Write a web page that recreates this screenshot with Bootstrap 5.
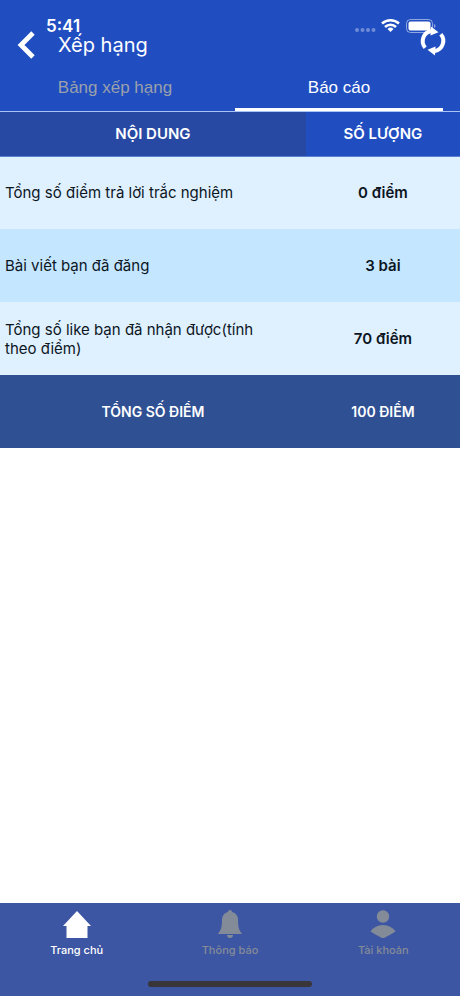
<!DOCTYPE html>
<html lang="vi">
<head>
<meta charset="utf-8">
<meta name="viewport" content="width=device-width, initial-scale=1">
<title>Xếp hạng</title>
<link href="https://cdn.jsdelivr.net/npm/bootstrap@5.3.0/dist/css/bootstrap.min.css" rel="stylesheet">
<style>
body { font-family: Inter, "Liberation Sans", sans-serif; font-size: 15px; background: #fff; }
.app-top { background: #204ec1; border-bottom: 1px solid #a9c4f5; }
.status-bar { position: absolute; inset: 0 0 auto 0; height: 52px; pointer-events: none; padding: 0 24px 0 46px; }
.clock { font-size: 17px; font-weight: 600; line-height: 20px; }
.title-bar { height: 68px; padding: 22px 12px 0 16px; }
.title-bar h1 { font-size: 20px; font-weight: 400; line-height: 28px; margin-left: 22px; }
.tab-row { padding: 0 17px 0 11px; gap: 16px; }
.tab-row .btn { height: 43px; font: 17px/24px "Liberation Sans", sans-serif; color: #9aa0ab; border: 0; border-bottom: 3px solid transparent; border-radius: 0; padding: 0; }
.tab-row .btn.active { color: #fff; border-bottom-color: #fff; }
.score-table { table-layout: fixed; line-height: 19px; color: #0c161e; }
.score-table th, .score-table td { vertical-align: middle; padding: 0 5px; }
.score-table .value { font-weight: 600; }
.col-label { width: 66.5%; }
.score-table thead th { height: 44px; font-size: 15px; font-weight: 600; color: #fff; background: #204ec1; text-align: center; border-bottom: 1px solid #5c80cf; }
.score-table thead th:first-child { background: #2849a3; }
.score-table tbody tr, .score-table tfoot tr { height: 73px; }
.score-table tbody tr { background: #dff0ff; }
.score-table tbody tr:nth-child(even) { background: #c4e6ff; }
.score-table tbody th { font-weight: 400; padding-right: 40px; }
.score-table tfoot tr { background: #2f5194; color: #fff; }
.score-table tfoot th, .score-table tfoot td { font-size: 14px; font-weight: 600; text-align: center; }
.bottom-nav { background: #3d56a3; height: 93px; position: relative; }
.bottom-nav a { color: #848b98; font-size: 11px; font-weight: 500; line-height: 14px; padding-top: 5px; gap: 5px; }
.bottom-nav a.active { color: #fff; }
.home-bar { position: absolute; left: 50%; bottom: 9px; width: 164px; height: 6px; margin-left: -82px; border-radius: 3px; background: #393639; }
</style>
</head>
<body class="d-flex flex-column min-vh-100">
<header class="app-top text-white position-relative">
  <div class="title-bar d-flex align-items-center">
    <button class="btn p-0 border-0 text-white d-flex" type="button" aria-label="Quay lại">
      <svg width="20" height="28" viewBox="0 0 20 28" fill="none" stroke="currentColor" stroke-width="4.8"><path d="M17 2 5 14l12 12"/></svg>
    </button>
    <h1 class="mb-0 flex-grow-1">Xếp hạng</h1>
    <button class="btn p-0 border-0 text-white d-flex mb-2" type="button" aria-label="Tải lại">
      <svg width="30" height="30" viewBox="0 0 30 30"><g fill="none" stroke="currentColor" stroke-width="4"><path d="M7.200 21.700A10.200 10.200 0 0 1 13.200 5"/><path d="M22.800 8.300A10.200 10.200 0 0 1 16.800 25"/></g><g fill="currentColor"><path d="M13 .5 20.500 6.200 12.500 9.500Z"/><path d="M17 29.500 9.500 23.800 17.500 20.500Z"/></g></svg>
    </button>
  </div>
  <div class="tab-row d-flex" role="tablist">
    <button class="btn flex-fill w-50" type="button" role="tab" aria-selected="false">Bảng xếp hạng</button>
    <button class="btn flex-fill w-50 active" type="button" role="tab" aria-selected="true">Báo cáo</button>
  </div>
  <div class="status-bar d-flex justify-content-between align-items-center">
    <span class="clock">5:41</span>
    <svg width="82" height="18" viewBox="0 0 82 18">
      <g fill="#fff" opacity=".35"><circle cx="3" cy="13" r="2"/><circle cx="8.500" cy="13" r="2"/><circle cx="14" cy="13" r="2"/><circle cx="19.500" cy="13" r="2"/></g>
      <g fill="none" stroke="#fff" stroke-width="2.500"><path d="M28 6.500a12.500 12.500 0 0 1 17 0"/><path d="M31 10a8 8 0 0 1 11 0"/></g>
      <path d="m36.500 15-3-3a4.300 4.300 0 0 1 6 0Z" fill="#fff"/>
      <rect x="52.500" y="2.500" width="26" height="13" rx="4" fill="none" stroke="#fff" opacity=".5"/>
      <rect x="54.500" y="4.500" width="22" height="9" rx="2" fill="#fff"/>
      <path d="M80 7v4q1.500-.5 1.500-2T80 7" fill="#fff" opacity=".5"/>
    </svg>
  </div>
</header>
<main class="flex-grow-1">
  <table class="score-table w-100">
    <thead><tr><th class="col-label" scope="col">NỘI DUNG</th><th scope="col">SỐ LƯỢNG</th></tr></thead>
    <tbody>
      <tr><th scope="row">Tổng số điểm trả lời trắc nghiệm</th><td class="value text-center">0 điểm</td></tr>
      <tr><th scope="row">Bài viết bạn đã đăng</th><td class="value text-center">3 bài</td></tr>
      <tr><th scope="row">Tổng số like bạn đã nhận được(tính theo điểm)</th><td class="value text-center">70 điểm</td></tr>
    </tbody>
    <tfoot><tr><th scope="row">TỔNG SỐ ĐIỂM</th><td>100 ĐIỂM</td></tr></tfoot>
  </table>
</main>
<nav class="bottom-nav d-flex align-items-start" aria-label="Điều hướng chính">
  <a class="active d-flex flex-column align-items-center text-decoration-none w-100" href="#">
    <svg width="30" height="30" viewBox="0 0 30 30" fill="currentColor"><path d="M15 3 29 18H25.500v12H4.500V18H1Z"/></svg>Trang chủ</a>
  <a class="d-flex flex-column align-items-center text-decoration-none w-100" href="#">
    <svg width="30" height="30" viewBox="0 0 30 30" fill="currentColor"><path d="M13 4a2 2 0 0 1 4 0c4 1 6 4 6 8 0 7 1 10 4 14H3c3-4 4-7 4-14 0-4 2-7 6-8Z"/><path d="M12 27h6a3 3 0 0 1-6 0Z"/></svg>Thông báo</a>
  <a class="d-flex flex-column align-items-center text-decoration-none w-100" href="#">
    <svg width="30" height="30" viewBox="0 0 30 30" fill="currentColor"><circle cx="15" cy="8.500" r="6.200"/><path d="M2.500 23.500Q7 17 15 17t12.500 6.500Q22 27 15 30.500 8 27 2.500 23.500Z"/></svg>Tài khoản</a>
  <div class="home-bar"></div>
</nav>
<script src="https://cdn.jsdelivr.net/npm/bootstrap@5.3.0/dist/js/bootstrap.bundle.min.js"></script>
</body>
</html>
